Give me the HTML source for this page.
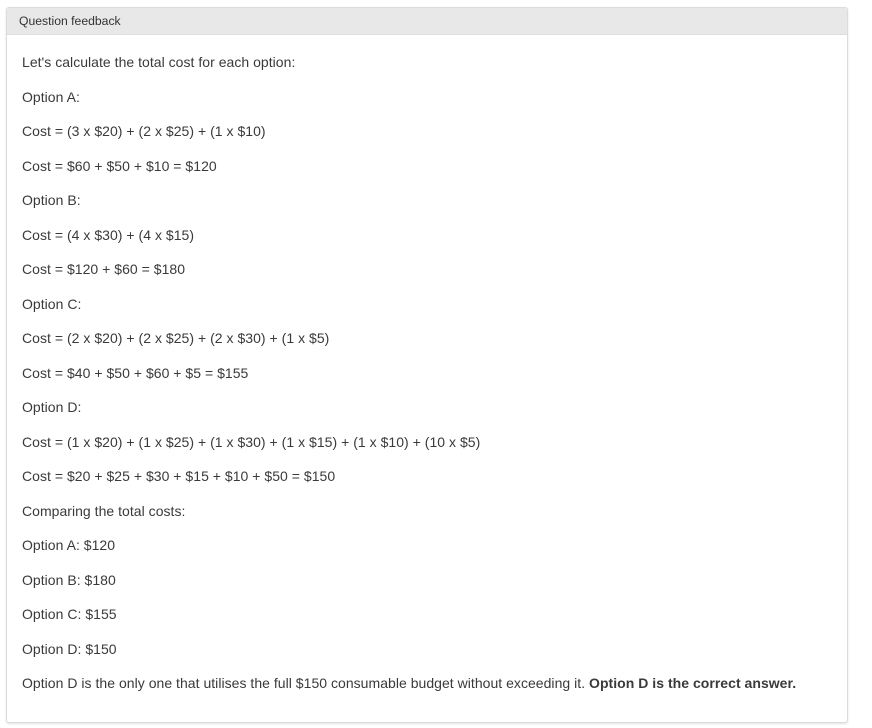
<!DOCTYPE html>
<html><head><style>
body{margin:0;background:#fff;font-family:"Liberation Sans",sans-serif;}
.box{position:absolute;left:6px;top:7px;width:840px;height:714px;border:1px solid #dcdcdc;border-radius:3px;box-shadow:0 1px 2px rgba(0,0,0,.12);background:#fff;}
.hd{height:26px;background:#e8e8e8;font-size:12.2px;color:#333;line-height:27px;padding-left:12px;border-bottom:1px solid #ddd;}
.bd{padding:0 0 0 15px;}
p{margin:0;height:34.5px;line-height:34.5px;font-size:14px;color:#3a3a3a;letter-spacing:0.03px;}
.first{margin-top:10px;}
</style></head><body>
<div class="box">
<div class="hd">Question feedback</div>
<div class="bd">
<p class="first">Let's calculate the total cost for each option:</p>
<p>Option A:</p>
<p>Cost = (3 x $20) + (2 x $25) + (1 x $10)</p>
<p>Cost = $60 + $50 + $10 = $120</p>
<p>Option B:</p>
<p>Cost = (4 x $30) + (4 x $15)</p>
<p>Cost = $120 + $60 = $180</p>
<p>Option C:</p>
<p>Cost = (2 x $20) + (2 x $25) + (2 x $30) + (1 x $5)</p>
<p>Cost = $40 + $50 + $60 + $5 = $155</p>
<p>Option D:</p>
<p>Cost = (1 x $20) + (1 x $25) + (1 x $30) + (1 x $15) + (1 x $10) + (10 x $5)</p>
<p>Cost = $20 + $25 + $30 + $15 + $10 + $50 = $150</p>
<p>Comparing the total costs:</p>
<p>Option A: $120</p>
<p>Option B: $180</p>
<p>Option C: $155</p>
<p>Option D: $150</p>
<p>Option D is the only one that utilises the full $150 consumable budget without exceeding it. <b>Option D is the correct answer.</b></p>
</div></div>
</body></html>
